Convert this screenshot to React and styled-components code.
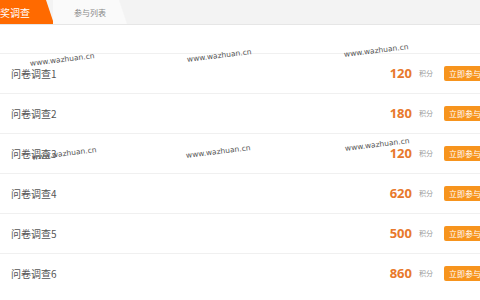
import React from "react";
import styled, { createGlobalStyle } from "styled-components";

const Global = createGlobalStyle`
  body {
    margin: 0;
    background: #fff;
    font-family: "Noto Sans CJK SC", "Noto Sans", sans-serif;
  }
`;

const Page = styled.div`
  position: relative;
  width: 480px;
  height: 300px;
  overflow: hidden;
  background: #fff;
`;

const TabBar = styled.div`
  display: flex;
  height: 25px;
  background: #f3f3f3;
  border-bottom: 1px solid #e6e6e6;
  box-sizing: border-box;
`;

const Tab = styled.div`
  display: flex;
  align-items: center;
  height: 100%;
  width: ${(p) => p.$w}px;
  margin-left: ${(p) => p.$ml || 0}px;
  padding-left: ${(p) => p.$pl || 0}px;
  box-sizing: border-box;
  background: ${(p) => (p.$active ? "#ff6a00" : "#fafafa")};
  color: ${(p) => (p.$active ? "#fff" : "#888")};
  font-size: ${(p) => (p.$active ? 10 : 8)}px;
  clip-path: polygon(0 0, calc(100% - 8px) 0, 100% 100%, 0 100%);
  white-space: nowrap;
`;

const List = styled.div`
  display: flex;
  flex-direction: column;
  padding-top: 28px;
`;

const Row = styled.div`
  display: flex;
  align-items: center;
  height: 40px;
  border-top: 1px solid #f0f0f0;
  box-sizing: border-box;
  padding-left: 11px;
  padding-bottom: 1px;
`;

const Title = styled.div`
  flex: 1;
  font-size: 10px;
  color: #555;
`;

const Score = styled.div`
  font-family: "Open Sans", "Noto Sans", sans-serif;
  font-weight: 700;
  font-size: 13px;
  color: #e8792c;
`;

const Unit = styled.span`
  font-size: 7px;
  color: #999;
  margin-left: 7px;
  margin-right: 11px;
`;

const JoinButton = styled.div`
  width: 44px;
  height: 15px;
  margin-right: -8px;
  box-sizing: border-box;
  background: #f7941d;
  border-radius: 2px;
  color: #fff;
  font-size: 8px;
  line-height: 15px;
  padding-left: 5px;
  white-space: nowrap;
  overflow: hidden;
`;

const Watermark = styled.div`
  position: absolute;
  left: ${(p) => p.$x}px;
  top: ${(p) => p.$y}px;
  font-family: "DejaVu Sans", sans-serif;
  font-size: 7.5px;
  color: #555;
  transform: rotate(-7deg);
  transform-origin: left center;
  pointer-events: none;
`;

const surveys = [
  { name: "问卷调查1", score: 120 },
  { name: "问卷调查2", score: 180 },
  { name: "问卷调查3", score: 120 },
  { name: "问卷调查4", score: 620 },
  { name: "问卷调查5", score: 500 },
  { name: "问卷调查6", score: 860 },
];

const marks = [
  { x: 30, y: 59 },
  { x: 187, y: 55 },
  { x: 344, y: 50 },
  { x: 32, y: 153 },
  { x: 186, y: 151 },
  { x: 345, y: 144 },
];

export default function App() {
  return (
    <Page>
      <Global />
      <TabBar>
        <Tab $active $w={64} $ml={-10}>有奖调查</Tab>
        <Tab $w={74} $ml={-1} $pl={21}>参与列表</Tab>
      </TabBar>
      <List>
        {surveys.map((s, i) => (
          <Row key={i}>
            <Title>{s.name}</Title>
            <Score>{s.score}</Score>
            <Unit>积分</Unit>
            <JoinButton>立即参与</JoinButton>
          </Row>
        ))}
      </List>
      {marks.map((m, i) => (
        <Watermark key={i} $x={m.x} $y={m.y}>www.wazhuan.cn</Watermark>
      ))}
    </Page>
  );
}
